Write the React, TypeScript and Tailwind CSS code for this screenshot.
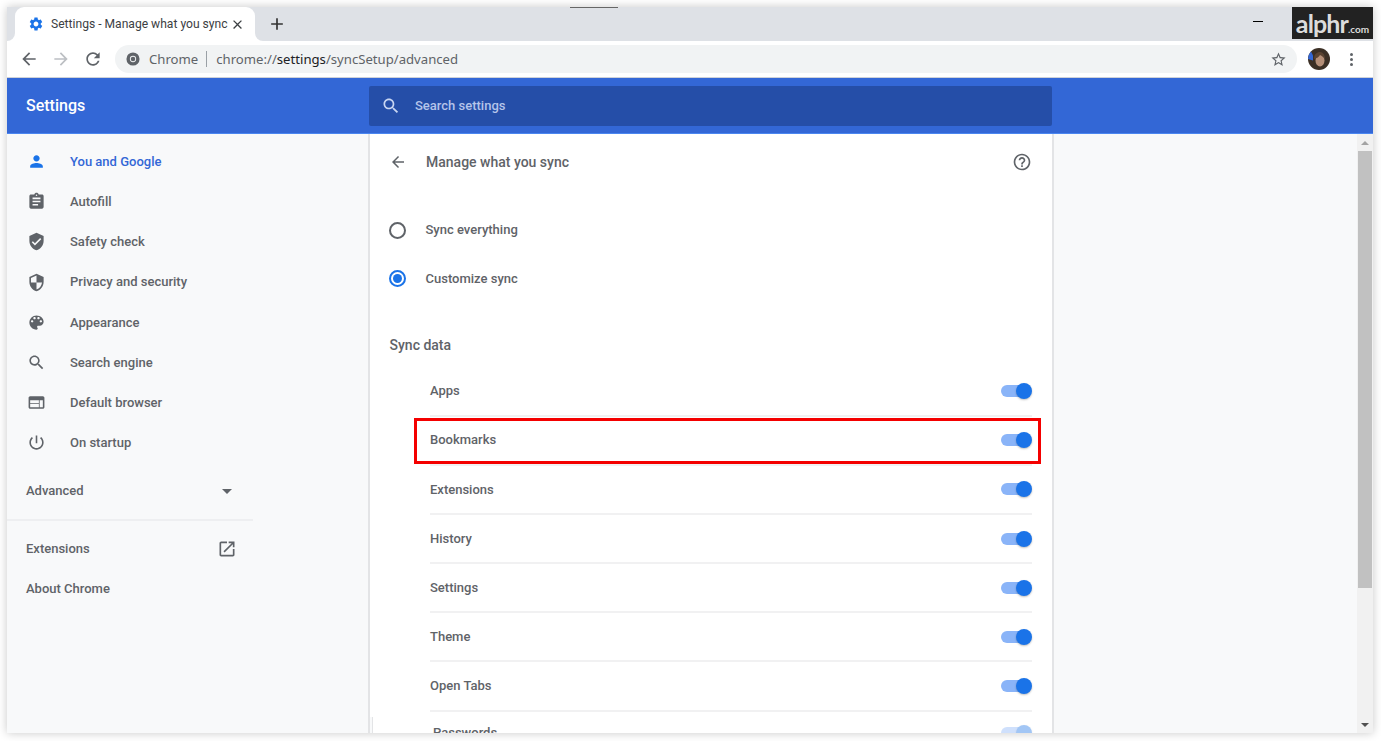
import React from "react";

const P: Record<string, string> = {
  person: "M12 12c2.21 0 4-1.79 4-4s-1.79-4-4-4-4 1.79-4 4 1.79 4 4 4zm0 2c-2.67 0-8 1.34-8 4v2h16v-2c0-2.66-5.33-4-8-4z",
  assignment: "M19 3h-4.18C14.4 1.84 13.3 1 12 1c-1.3 0-2.4.84-2.82 2H5c-1.1 0-2 .9-2 2v14c0 1.1.9 2 2 2h14c1.1 0 2-.9 2-2V5c0-1.1-.9-2-2-2zm-7 0c.55 0 1 .45 1 1s-.45 1-1 1-1-.45-1-1 .45-1 1-1zm2 14H7v-2h7v2zm3-4H7v-2h10v2zm0-4H7V7h10v2z",
  verified: "M12 1L3 5v6c0 5.55 3.84 10.74 9 12 5.16-1.26 9-6.45 9-12V5l-9-4zm-2 16l-4-4 1.41-1.41L10 14.17l6.59-6.59L18 9l-8 8z",
  security: "M12 1L3 5v6c0 5.55 3.84 10.74 9 12 5.16-1.26 9-6.45 9-12V5l-9-4zm0 10.99h7c-.53 4.12-3.28 7.79-7 8.94V12H5V6.3l7-3.11v8.8z",
  palette: "M12 3c-4.97 0-9 4.03-9 9s4.03 9 9 9c.83 0 1.5-.67 1.5-1.5 0-.39-.15-.74-.39-1.01-.23-.26-.38-.61-.38-.99 0-.83.67-1.5 1.5-1.5H16c2.76 0 5-2.24 5-5 0-4.42-4.03-8-9-8zm-5.5 9c-.83 0-1.5-.67-1.5-1.5S5.67 9 6.5 9 8 9.67 8 10.5 7.33 12 6.5 12zm3-4C8.67 8 8 7.33 8 6.5S8.67 5 9.5 5s1.5.67 1.5 1.5S10.33 8 9.5 8zm5 0c-.83 0-1.5-.67-1.5-1.5S13.67 5 14.5 5s1.5.67 1.5 1.5S15.33 8 14.5 8zm3 4c-.83 0-1.5-.67-1.5-1.5S16.67 9 17.5 9s1.5.67 1.5 1.5-.67 1.5-1.5 1.5z",
  search: "M15.5 14h-.79l-.28-.27C15.41 12.59 16 11.11 16 9.5 16 5.91 13.09 3 9.5 3S3 5.91 3 9.5 5.91 16 9.5 16c1.61 0 3.09-.59 4.23-1.57l.27.28v.79l5 4.99L20.49 19l-4.99-5zm-6 0C7.01 14 5 11.99 5 9.5S7.01 5 9.5 5 14 7.01 14 9.5 11.99 14 9.5 14z",
  web: "M20 4H4c-1.1 0-1.99.9-1.99 2L2 18c0 1.1.9 2 2 2h16c1.1 0 2-.9 2-2V6c0-1.1-.9-2-2-2zm-5 14H4v-4h11v4zm0-5H4V9h11v4zm5 5h-4V9h4v9z",
  power: "M13 3h-2v10h2V3zm4.83 2.17l-1.42 1.42C17.99 7.86 19 9.81 19 12c0 3.87-3.13 7-7 7s-7-3.13-7-7c0-2.19 1.01-4.14 2.58-5.42L6.17 5.17C4.23 6.82 3 9.26 3 12c0 4.97 4.03 9 9 9s9-4.03 9-9c0-2.74-1.23-5.18-3.17-6.83z",
  open: "M19 19H5V5h7V3H5c-1.11 0-2 .9-2 2v14c0 1.1.89 2 2 2h14c1.1 0 2-.9 2-2v-7h-2v7zM14 3v2h3.59l-9.83 9.83 1.41 1.41L19 6.41V10h2V3h-7z",
  back: "M20 11H7.83l5.59-5.59L12 4l-8 8 8 8 1.41-1.41L7.83 13H20v-2z",
  forward: "M4 11h12.17l-5.59-5.59L12 4l8 8-8 8-1.41-1.41L16.17 13H4v-2z",
  help: "M11 18h2v-2h-2v2zm1-16C6.48 2 2 6.48 2 12s4.48 10 10 10 10-4.48 10-10S17.52 2 12 2zm0 18c-4.41 0-8-3.59-8-8s3.59-8 8-8 8 3.59 8 8-3.59 8-8 8zm0-14c-2.21 0-4 1.79-4 4h2c0-1.1.9-2 2-2s2 .9 2 2c0 2-3 1.75-3 5h2c0-2.25 3-2.5 3-5 0-2.21-1.79-4-4-4z",
  gear: "M19.14 12.94c.04-.3.06-.61.06-.94 0-.32-.02-.64-.07-.94l2.03-1.58c.18-.14.23-.41.12-.61l-1.92-3.32c-.12-.22-.37-.29-.59-.22l-2.39.96c-.5-.38-1.03-.7-1.62-.94l-.36-2.54c-.04-.24-.24-.41-.48-.41h-3.84c-.24 0-.43.17-.47.41l-.36 2.54c-.59.24-1.13.57-1.62.94l-2.39-.96c-.22-.08-.47 0-.59.22L2.74 8.87c-.12.21-.08.47.12.61l2.03 1.58c-.05.3-.09.63-.09.94s.02.64.07.94l-2.03 1.58c-.18.14-.23.41-.12.61l1.92 3.32c.12.22.37.29.59.22l2.39-.96c.5.38 1.03.7 1.62.94l.36 2.54c.05.24.24.41.48.41h3.84c.24 0 .44-.17.47-.41l.36-2.54c.59-.24 1.13-.56 1.62-.94l2.39.96c.22.08.47 0 .59-.22l1.92-3.32c.12-.22.07-.47-.12-.61l-2.01-1.58zM12 15.6c-1.98 0-3.6-1.62-3.6-3.6s1.62-3.6 3.6-3.6 3.6 1.62 3.6 3.6-1.62 3.6-3.6 3.6z",
  reload: "M17.65 6.35C16.2 4.9 14.21 4 12 4c-4.42 0-7.99 3.58-7.99 8s3.57 8 7.99 8c3.73 0 6.84-2.55 7.73-6h-2.08c-.82 2.33-3.04 4-5.65 4-3.31 0-6-2.69-6-6s2.69-6 6-6c1.66 0 3.14.69 4.22 1.78L13 11h7V4l-2.35 2.35z",
  star: "M22 9.24l-7.19-.62L12 2 9.19 8.63 2 9.24l5.46 4.73L5.82 21 12 17.27 18.18 21l-1.63-7.03L22 9.24zM12 15.4l-3.76 2.27 1-4.28-3.32-2.88 4.38-.38L12 6.1l1.71 4.04 4.38.38-3.32 2.88 1 4.28L12 15.4z",
  close: "M19 6.41L17.59 5 12 10.59 6.41 5 5 6.41 10.59 12 5 17.59 6.41 19 12 13.41 17.59 19 19 17.59 13.41 12z",
  plus: "M19 13h-6v6h-2v-6H5v-2h6V5h2v6h6v2z",
};

function Icon({ d, className }: { d: string; className: string }) {
  return (
    <svg viewBox="0 0 24 24" fill="currentColor" className={className}>
      <path d={P[d]} />
    </svg>
  );
}

const nav = [
  ["person", "You and Google"],
  ["assignment", "Autofill"],
  ["verified", "Safety check"],
  ["security", "Privacy and security"],
  ["palette", "Appearance"],
  ["search", "Search engine"],
  ["web", "Default browser"],
  ["power", "On startup"],
];

const rows = ["Apps", "Bookmarks", "Extensions", "History", "Settings", "Theme", "Open Tabs"];

function Toggle({ faded }: { faded?: boolean }) {
  return (
    <div className={`relative w-[31px] h-[16px] ${faded ? "opacity-40" : ""}`}>
      <div className="absolute left-0 top-[2px] w-[27px] h-[12px] rounded-full bg-[#8ab4f8]" />
      <div className="absolute right-0 top-0 w-[16px] h-[16px] rounded-full bg-[#1a73e8] shadow-[0_1px_2px_rgba(0,0,0,0.25)]" />
    </div>
  );
}

export default function App() {
  return (
    <div className="w-[1381px] h-[741px] bg-white pt-[7px] pl-[7px] overflow-hidden [font-family:Roboto,sans-serif]">
      <div className="relative w-[1366px] h-[726px] flex flex-col bg-white shadow-[0_0_9px_rgba(0,0,0,0.22)]">
        {/* top notch */}
        <div className="absolute left-[563px] top-0 w-[48px] h-px bg-[#666]" />

        {/* tab strip */}
        <div className="h-[34px] shrink-0 bg-[#dee1e6] flex items-stretch pl-[8px]">
          <div className="relative w-[240px] bg-white rounded-t-[9px] flex items-center pl-[13px] pr-[10px]">
            <span className="absolute -left-[8px] bottom-0 w-[8px] h-[8px] bg-white">
              <span className="block w-full h-full bg-[#dee1e6] rounded-br-[8px]" />
            </span>
            <span className="absolute -right-[8px] bottom-0 w-[8px] h-[8px] bg-white">
              <span className="block w-full h-full bg-[#dee1e6] rounded-bl-[8px]" />
            </span>
            <Icon d="gear" className="w-[16px] h-[16px] text-[#1a73e8] shrink-0" />
            <span className="ml-[7px] w-[176px] whitespace-nowrap text-[12.1px] text-[#3c4043]">
              Settings - Manage what you sync
            </span>
            <Icon d="close" className="ml-[3px] w-[15px] h-[15px] text-[#3c4043] shrink-0" />
          </div>
          <div className="ml-[12px] flex items-center">
            <Icon d="plus" className="w-[20px] h-[20px] text-[#333]" />
          </div>
          <div className="flex-1" />
          <div className="w-[10px] h-px bg-black mt-[14px] mr-[29px]" />
          <div className="w-[81px] h-[32px] bg-[#222] flex items-end justify-center pb-[1px] text-[#dcdcdc] [font-family:Lato,sans-serif]">
            <span className="text-[25px] leading-[30px] font-bold tracking-[-0.9px]">alphr</span>
            <span className="text-[10px] leading-[18px] font-bold">.com</span>
          </div>
        </div>

        {/* toolbar */}
        <div className="h-[37px] shrink-0 bg-white border-b border-[#cfd2d8] flex items-center">
          <Icon d="back" className="ml-[12px] w-[20px] h-[20px] text-[#5f6368]" />
          <Icon d="forward" className="ml-[12px] w-[20px] h-[20px] text-[#bcbfc3]" />
          <Icon d="reload" className="ml-[12px] w-[20px] h-[20px] text-[#5f6368]" />
          <div className="ml-[12px] w-[1182px] h-[28px] rounded-full bg-[#f1f3f4] flex items-center pl-[11px] pr-[10px] text-[13.15px] text-[#5f6368] [font-family:'Noto_Sans',sans-serif]">
            <svg viewBox="0 0 16 16" className="w-[14px] h-[14px] shrink-0">
              <circle cx="8" cy="8" r="7.5" fill="#5f6368" />
              <circle cx="8" cy="8" r="3.6" fill="#f1f3f4" />
              <circle cx="8" cy="8" r="2.6" fill="#5f6368" />
            </svg>
            <span className="ml-[9px] mt-px">Chrome</span>
            <span className="ml-[8px] w-px h-[16px] bg-[#9aa0a6]" />
            <span className="ml-[9px] mt-px whitespace-nowrap">
              chrome://<span className="text-[#202124]">settings</span>/syncSetup/advanced
            </span>
            <span className="flex-1" />
            <Icon d="star" className="w-[17px] h-[17px] text-[#5f6368]" />
          </div>
          <svg viewBox="0 0 22 22" className="ml-[11px] w-[22px] h-[22px] shrink-0">
            <circle cx="11" cy="11" r="11" fill="#3b2f25" />
            <path d="M0 11a11 11 0 0 1 3-7.5l2 4v5z" fill="#3367d6" />
            <ellipse cx="12" cy="12.5" rx="4.5" ry="6" fill="#b58f78" />
            <path d="M6 11c0-5 3-7 6-7s5 3 5 7c-1.5-2-3-3-5-4-1 2-3 3-6 4z" fill="#5a4332" />
          </svg>
          <div className="ml-[20px] flex flex-col gap-[2px]">
            <span className="w-[3px] h-[3px] rounded-full bg-[#5f6368]" />
            <span className="w-[3px] h-[3px] rounded-full bg-[#5f6368]" />
            <span className="w-[3px] h-[3px] rounded-full bg-[#5f6368]" />
          </div>
        </div>

        {/* settings header */}
        <div className="h-[56px] shrink-0 bg-[#3367d6] border-b border-[#4a86f0] flex items-center">
          <div className="w-[362px] pl-[19px] pt-px text-[16px] font-medium text-white">Settings</div>
          <div className="w-[683px] h-[40px] mt-px bg-[#254ea8] rounded-[2px] flex items-center pl-[12px]">
            <Icon d="search" className="w-[20px] h-[20px] text-[#c9d6f2]" />
            <span className="ml-[14px] -mt-px text-[13px] font-medium text-[#b4c4ea]">Search settings</span>
          </div>
        </div>

        {/* body */}
        <div className="flex-1 min-h-0 flex bg-[#f8f9fa]">
          {/* sidebar */}
          <div className="w-[361px] shrink-0 text-[13px] font-medium text-[#5f6368]">
            <div className="h-[7.5px]" />
            {nav.map(([ic, label], i) => (
              <div key={label} className={`h-[40.2px] flex items-center pl-[20px] ${i === 0 ? "text-[#3367d6]" : ""}`}>
                <Icon d={ic} className={`w-[19px] h-[19px] shrink-0 ${i === 0 ? "text-[#1a73e8]" : "text-[#5f6368]"}`} />
                <span className="ml-[24px]">{label}</span>
              </div>
            ))}
            <div className="w-[246px] h-[58px] border-b-2 border-[#eeeff1] flex items-center pl-[19px]">
              <span className="flex-1">Advanced</span>
              <span className="mr-[21px] w-0 h-0 border-x-[5px] border-x-transparent border-t-[5px] border-t-[#5f6368]" />
            </div>
            <div className="h-[40px] w-[246px] flex items-center pl-[19px] mt-[7.5px]">
              <span className="flex-1">Extensions</span>
              <Icon d="open" className="mr-[16px] w-[20px] h-[20px] text-[#5f6368]" />
            </div>
            <div className="h-[40px] flex items-center pl-[19px]">About Chrome</div>
          </div>

          {/* card */}
          <div className="relative w-[686px] shrink-0 bg-white border-x-2 border-[#e3e4e6] overflow-hidden text-[13px] font-medium text-[#5f6368]">
            <div className="h-[56px] flex items-center pl-[19px] pr-[20px]">
              <Icon d="back" className="w-[18px] h-[18px] text-[#5f6368]" />
              <span className="ml-[19px] flex-1 text-[14px]">Manage what you sync</span>
              <Icon d="help" className="w-[20px] h-[20px] text-[#5f6368]" />
            </div>
            <div className="mt-[16px] h-[48px] flex items-center pl-[19px]">
              <span className="w-[17px] h-[17px] rounded-full border-2 border-[#5f6368]" />
              <span className="ml-[19.5px]">Sync everything</span>
            </div>
            <div className="h-[48px] flex items-center pl-[19px] pt-px">
              <span className="w-[17px] h-[17px] rounded-full border-2 border-[#1a73e8] flex items-center justify-center">
                <span className="w-[9px] h-[9px] rounded-full bg-[#1a73e8]" />
              </span>
              <span className="ml-[19.5px]">Customize sync</span>
            </div>
            <div className="mt-[23px] h-[40px] flex items-center pl-[19.5px] text-[14px]">Sync data</div>
            <div className="ml-[60px] mr-[20px] mt-[2.5px]">
              {rows.map((r) => (
                <div key={r} className="h-[49.17px] flex items-center justify-between border-b-2 border-[#f1f1f2]">
                  <span>{r}</span>
                  <Toggle />
                </div>
              ))}
            </div>
            {/* misaligned bottom slice of the stitched screenshot */}
            <div className="absolute left-[2px] right-0 bottom-0 h-[16px] bg-white border-l border-[#e3e4e6] overflow-hidden flex items-start justify-between pl-[60px] pr-[20px]">
              <span className="mt-[6px] leading-[20px]">Passwords</span>
              <div className="mt-[8px]"><Toggle faded /></div>
            </div>
            <div className="absolute left-0 bottom-0 w-[2px] h-[16px] bg-[#f8f9fa]" />
          </div>

          <div className="flex-1" />

          {/* scrollbar */}
          <div className="w-[16px] shrink-0 bg-[#f1f1f1] flex flex-col items-center">
            <div className="h-[17px] flex items-center justify-center">
              <span className="w-0 h-0 border-x-[4px] border-x-transparent border-b-[4px] border-b-[#a3a3a3]" />
            </div>
            <div className="w-[14px] h-[437px] bg-[#c1c1c1]" />
            <div className="flex-1" />
            <div className="h-[16px] flex items-center justify-center">
              <span className="w-0 h-0 border-x-[4px] border-x-transparent border-t-[4px] border-t-[#505050]" />
            </div>
          </div>
        </div>

        {/* annotation */}
        <div className="absolute left-[407px] top-[411px] w-[627px] h-[46px] border-[3px] border-[#f40000]" />
      </div>
    </div>
  );
}
